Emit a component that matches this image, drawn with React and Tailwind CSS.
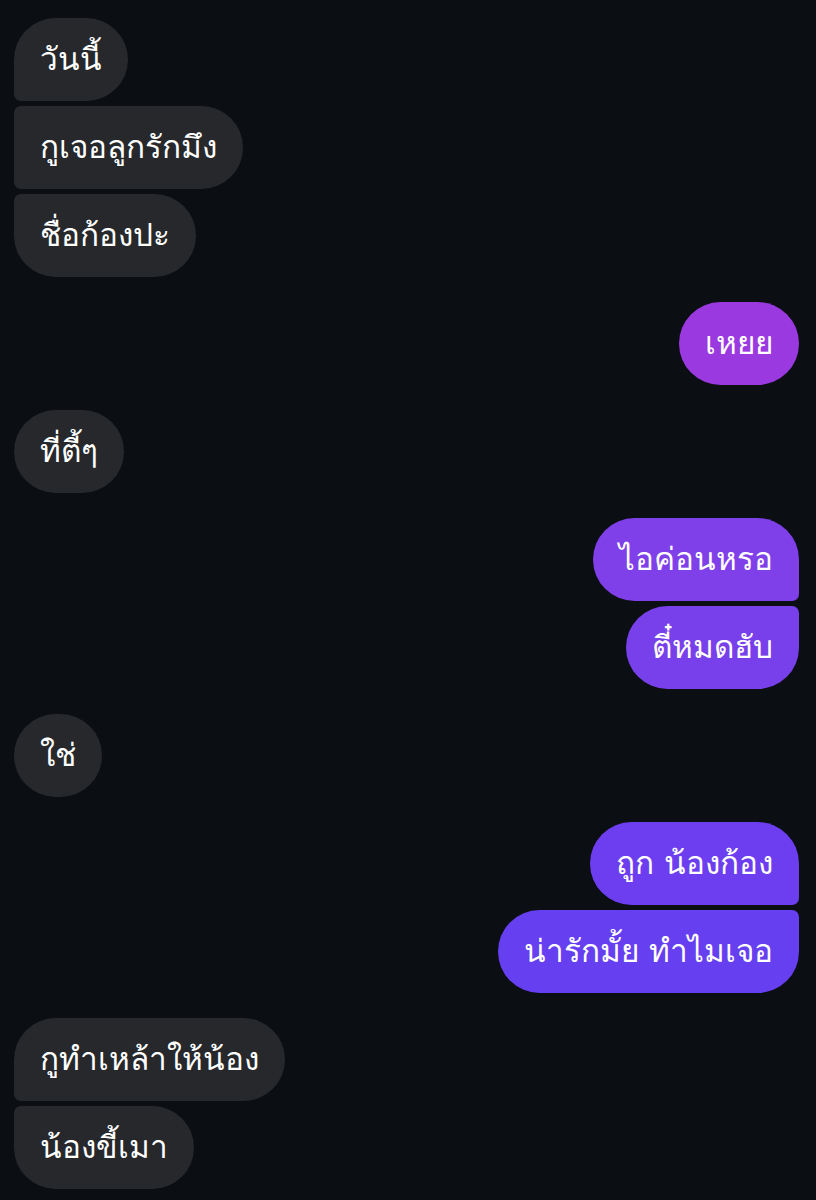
import clsx from 'clsx'

const GROUPS = [
  { side: 'in', msgs: ['วันนี้', 'กูเจอลูกรักมึง', 'ชื่อก้องปะ'] },
  { side: 'out', msgs: ['เหยย'], colors: ['bg-[#9a39e0]'] },
  { side: 'in', msgs: ['ที่ตี้ๆ'] },
  { side: 'out', msgs: ['ไอค่อนหรอ', 'ตี๋หมดฮับ'], colors: ['bg-[#7f3fe9]', 'bg-[#7840ea]'] },
  { side: 'in', msgs: ['ใช่'] },
  { side: 'out', msgs: ['ถูก น้องก้อง', 'น่ารักมั้ย ทำไมเจอ'], colors: ['bg-[#6c3ef0]', 'bg-[#663ff1]'] },
  { side: 'in', msgs: ['กูทำเหล้าให้น้อง', 'น้องขี้เมา'] },
]

function Bubble({ text, side, first, last, color }) {
  const incoming = side === 'in'
  return (
    <div
      className={clsx(
        'h-[83px] flex items-center px-[26px] rounded-[42px] text-white text-[31.5px] leading-none whitespace-nowrap',
        incoming ? 'self-start bg-[#26282c]' : clsx('self-end', color),
        incoming && !first && 'rounded-tl-[7px]',
        incoming && !last && 'rounded-bl-[7px]',
        !incoming && !first && 'rounded-tr-[7px]',
        !incoming && !last && 'rounded-br-[7px]'
      )}
    >
      {text}
    </div>
  )
}

export default function App() {
  return (
    <div
      className="min-h-[1200px] w-[816px] bg-[#0b0e13] pt-[18px] pl-[14px] pr-[17px] flex flex-col gap-[25px] overflow-hidden"
      style={{ fontFamily: '"DejaVu Sans", sans-serif' }}
    >
      {GROUPS.map((g, gi) => (
        <div key={gi} className="flex flex-col gap-[5px]">
          {g.msgs.map((m, i) => (
            <Bubble
              key={i}
              text={m}
              side={g.side}
              first={i === 0}
              last={i === g.msgs.length - 1}
              color={g.colors?.[i]}
            />
          ))}
        </div>
      ))}
    </div>
  )
}
